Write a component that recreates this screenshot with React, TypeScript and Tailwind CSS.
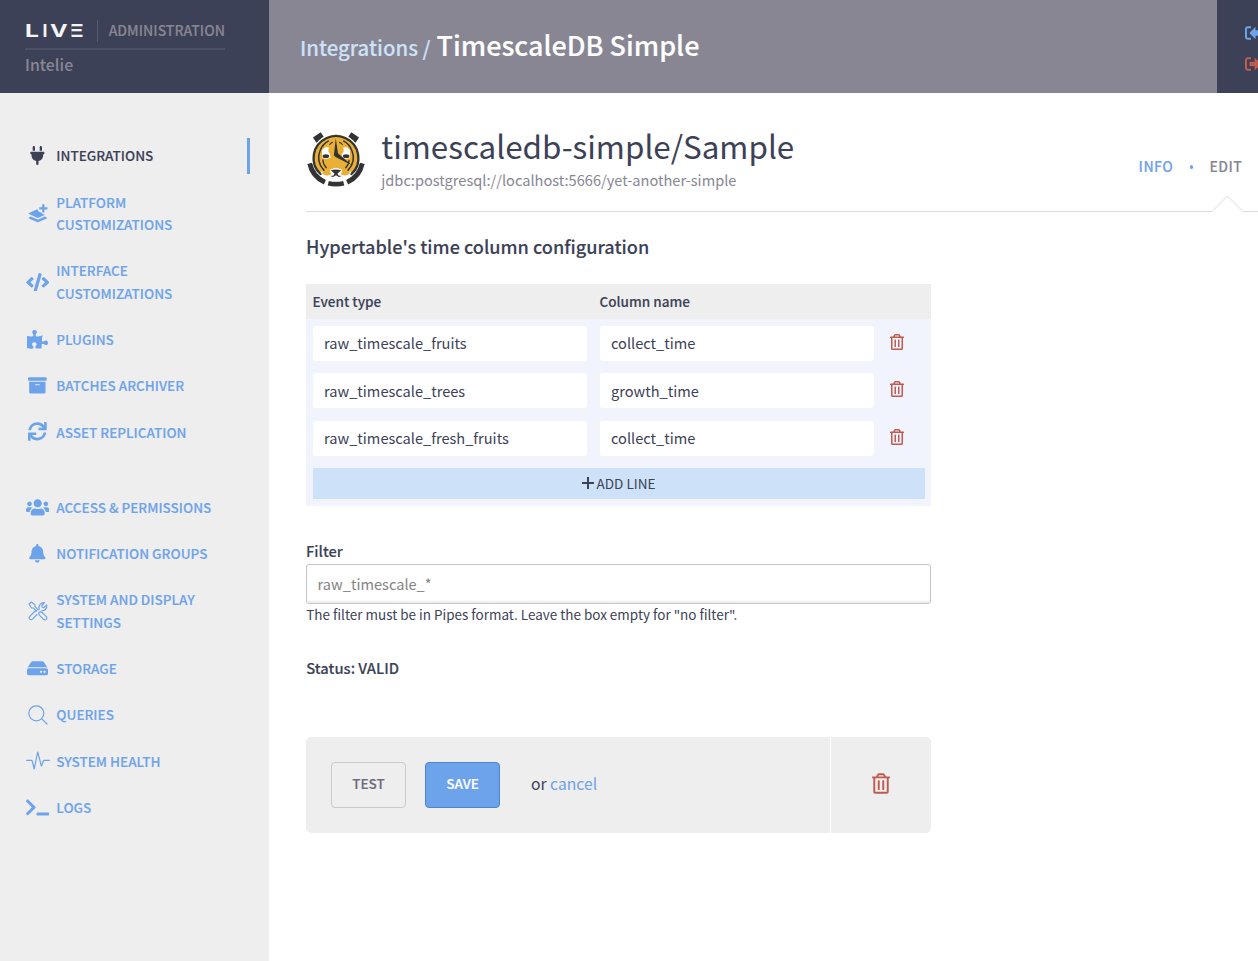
import React from "react";
import {
  FaPlug,
  FaCode,
  FaPuzzlePiece,
  FaArchive,
  FaSync,
  FaUsers,
  FaBell,
  FaHdd,
  FaTerminal,
  FaRegTrashAlt,
} from "react-icons/fa";

const icon = "h-[18.7px] w-[18.7px] shrink-0";
const midIcon = "h-[18.7px] w-[21px] shrink-0";
const wideIcon = "h-[18.7px] w-[23.4px] shrink-0";

function LayerPlus() {
  return (
    <svg viewBox="0 0 20 19" className="h-[19px] w-[20px]" fill="currentColor">
      <path d="M14.2 0.2h2.200v3h3v2.200h-3v3h-2.200v-3h-3V3.200h3z" />
      <path d="M8.600 5.600L1 9q-1 .5 0 1l8 3.700q.8.300 1.600 0l6.400-3q-3 0-3.600-2.100-3-.2-3.600-3-.6-.300-1.200 0z" />
      <path d="M2.800 12.600L1 13.400q-1 .5 0 1l8 3.700q.8.300 1.600 0l8-3.700q1-.5 0-1l-1.800-.8-6 2.700q-1 .4-2 0z" />
    </svg>
  );
}

function Tools() {
  return (
    <svg viewBox="0 0 20 20" className="size-[20px]" fill="none" stroke="currentColor" strokeWidth="1.15" strokeLinejoin="round" strokeLinecap="round">
      <path d="M1 3.200L3.200 1l3.600 2.400.3 2.200 3.200 3.200M1 3.200l2.400 3.600 2.200.3 3.200 3.200" />
      <path d="M11 11.600q1.600-1.300 3.300 0l4 4q1.200 1.400 0 2.700-1.300 1.200-2.700 0l-4-4q-1.300-1.400-.6-2.700z" />
      <path d="M9 13.500l-4.500 4.600q-1.300 1.200-2.700 0-1.200-1.400 0-2.700L8.200 9" />
      <path d="M11.200 8.600q-.9-3.200.9-5.300Q14 1.200 16.600 1.700L13.800 4.500l.4 1.700 1.700.4 2.800-2.800q.6 2.800-1.400 4.700-1.400 1.400-3.500 1.300" />
    </svg>
  );
}

function Search() {
  return (
    <svg viewBox="0 0 20 20" className="size-[20px]" fill="none" stroke="currentColor" strokeWidth="1.200" strokeLinecap="round">
      <circle cx="8.300" cy="8.300" r="7.500" />
      <path d="M13.800 13.800l5.200 5.200" />
    </svg>
  );
}

function Pulse() {
  return (
    <svg viewBox="0 0 24 19" className="h-[19px] w-[24px]" fill="none" stroke="currentColor" strokeWidth="1.200" strokeLinecap="round" strokeLinejoin="round">
      <path d="M.6 9.300H6l2.200 8.700L11.700 1l3.700 14 2.300-5.700h5.700" />
    </svg>
  );
}

function Tiger() {
  return (
    <svg viewBox="0 0 60 60" className="mx-[1px] size-[58px] shrink-0">
      <g stroke="#333" fill="none">
        <path d="M2.800 33.500A28 28 0 0 0 18.500 53" strokeWidth="5" />
        <path d="M57.200 33.500A28 28 0 0 1 41.500 53" strokeWidth="5" />
        <path d="M22 54q8 2 16 0" strokeWidth="4.800" />
        <path d="M8 9.500L16 4" strokeWidth="6.500" />
        <path d="M52 9.500L44 4" strokeWidth="6.500" />
      </g>
      <circle cx="30" cy="27" r="24.800" fill="#fff" />
      <circle cx="30" cy="27" r="23" fill="#e9b035" />
      <path d="M12 43q5 9 18 9t18-9l-7-2-11-3-11 3z" fill="#fff" />
      <path d="M15.500 20q3.500-5 7-3l-.5 4q2.500 3 2.500 6.500-5 2.500-9 0zM44.500 20q-3.500-5-7-3l.5 4q-2.500 3-2.500 6.500 5 2.500 9 0z" fill="#fff" />
      <path d="M16 36l8 3q-1 3 1.500 5.500-5 3-9.500 0zM44 36l-8 3q1 3-1.500 5.500 5 3 9.500 0z" fill="#e9b035" />
      <g stroke="#333" fill="none" strokeLinecap="round">
        <path d="M14 44.500A22.500 22.500 0 0 1 20 7.500Q30 2.500 40 7.500A22.500 22.500 0 0 1 46 44.500" strokeWidth="2.400" />
        <path d="M17.500 40.500A18 18 0 0 1 13.500 20.500Q16 13.500 22 10.500M42.500 40.500A18 18 0 0 0 46.500 20.500Q44 13.500 38 10.500" strokeWidth="1.600" />
        <path d="M20 38Q16.500 34.500 16.500 30M40 38Q43.500 34.500 43.500 30.500" strokeWidth="1.300" />
        <path d="M23.500 14q1.500-2 3-2.300M36.500 14q-1.500-2-3-2.300" strokeWidth="1.100" />
      </g>
      <ellipse cx="19.500" cy="26" rx="3.400" ry="1.900" fill="#333" />
      <ellipse cx="40.500" cy="26" rx="3.400" ry="1.900" fill="#333" />
      <path d="M29.800 7.500L27.800 25l1.700 2L46.500 35.500 32 23z" fill="#333" />
      <path d="M24.500 40.500q5.500-1.500 11 0l-4 3.500 1 2 3.500.5-3 1-3-1.700-3 1.700-3-1 3.500-.5 1-2z" fill="#333" />
    </svg>
  );
}

function Item({ icon, label, active }: { icon: React.ReactNode; label: React.ReactNode; active?: boolean }) {
  return (
    <a className={`flex items-center py-[11.86px] pr-[19px] pl-[25px] ${active ? "text-[#3c4157]" : "text-[#6da3ea]"}`}>
      <span className="flex w-[25px] shrink-0 justify-center">{icon}</span>
      <span className="ml-[6.3px] flex-1 text-[13.52px] leading-[22.5px] font-medium [-webkit-text-stroke:0.12px]">{label}</span>
      {active && <span className="-my-[7px] h-9 w-[3px] bg-[#6da3ea]" />}
    </a>
  );
}

const lines = [
  ["raw_timescale_fruits", "collect_time"],
  ["raw_timescale_trees", "growth_time"],
  ["raw_timescale_fresh_fruits", "collect_time"],
];

const field = "h-[35px] w-[274px] rounded-[3px] bg-white pl-[11px] pb-[1.8px] text-[14.6px] outline-none";

export default function App() {
  return (
    <div className="flex h-[961px] w-[1258px] flex-col overflow-hidden bg-white font-['Noto_Sans_CJK_SC','Noto_Sans',sans-serif] text-[#3c4157]">
      <header className="flex h-[93px] shrink-0">
        <div className="w-[269px] bg-[#3c4157] pt-[20px] pl-[25px] font-medium text-[#888693]">
          <div className="flex h-[30px] w-[200px] border-b-2 border-[#4d5167]">
            <div className="flex h-[22px] w-[73px] items-center border-r border-[#555970] font-['Inter',sans-serif] text-[17.5px] leading-[22px] font-bold text-[#f4f4f6]">
              <span className="w-[17.500px] origin-left scale-x-[1.4]">L</span>
              <span className="w-[7px]">I</span>
              <span className="w-[14.500px] origin-left scale-x-[1.35]">V</span>
              <span className="w-[11px] origin-left scale-x-[1.9] [clip-path:inset(0_0_0_36%)]">E</span>
            </div>
            <span className="-mt-px ml-[11px] text-[14px] leading-[22px] [-webkit-text-stroke:0.12px]">ADMINISTRATION</span>
          </div>
          <div className="text-[15.9px] leading-[30px] [-webkit-text-stroke:0.1px]">Intelie</div>
        </div>
        <div className="flex flex-1 items-baseline bg-[#888693] pt-[25px] pl-[31px] font-medium">
          <span className="text-[20.400px] leading-[40px] text-[#cde2f8] [-webkit-text-stroke:0.12px]">Integrations /</span>
          <span className="ml-[6px] text-[26.950px] leading-[40px] text-white [-webkit-text-stroke:0.15px]">TimescaleDB Simple</span>
        </div>
        <div className="flex w-[41px] flex-col gap-[17px] overflow-hidden bg-[#3c4157] pt-[25.500px] pl-[27.500px]">
          <svg viewBox="0 0 20 14" className="h-[14px] w-[20px] shrink-0 text-[#6da3ea]" fill="currentColor">
            <path d="M6 1.200H3Q1 1.200 1 3.200v7.600q0 2 2 2h3" fill="none" stroke="currentColor" strokeWidth="2" />
            <path d="M5 6.300L10.500 .8v3.400H19v5.600h-8.500v3.400L5 7.700q-.6-.7 0-1.400z" />
          </svg>
          <svg viewBox="0 0 20 14" className="h-[14px] w-[20px] shrink-0 text-[#c05b4f]" fill="currentColor">
            <path d="M6 1.200H3Q1 1.200 1 3.200v7.600q0 2 2 2h3" fill="none" stroke="currentColor" strokeWidth="2" />
            <path d="M4.600 4.700h5V.8l6.600 5.700q.4.5 0 1L9.600 13.200V9.300h-5z" />
          </svg>
        </div>
      </header>

      <div className="flex min-h-0 flex-1">
        <nav className="w-[269px] shrink-0 bg-[#eeeeee] pt-[39.6px]">
          <Item active icon={<FaPlug className={icon} />} label="INTEGRATIONS" />
          <Item icon={<LayerPlus />} label={<>PLATFORM<br />CUSTOMIZATIONS</>} />
          <Item icon={<FaCode className={wideIcon} />} label={<>INTERFACE<br />CUSTOMIZATIONS</>} />
          <Item icon={<FaPuzzlePiece className={midIcon} />} label="PLUGINS" />
          <Item icon={<FaArchive className={icon} />} label="BATCHES ARCHIVER" />
          <Item icon={<FaSync className={icon} />} label="ASSET REPLICATION" />
          <div className="h-[29.2px]" />
          <Item icon={<FaUsers className={wideIcon} />} label="ACCESS & PERMISSIONS" />
          <Item icon={<FaBell className={icon} />} label="NOTIFICATION GROUPS" />
          <Item icon={<Tools />} label={<>SYSTEM AND DISPLAY<br />SETTINGS</>} />
          <Item icon={<FaHdd className={midIcon} />} label="STORAGE" />
          <Item icon={<Search />} label="QUERIES" />
          <Item icon={<Pulse />} label="SYSTEM HEALTH" />
          <Item icon={<FaTerminal className={wideIcon} />} label="LOGS" />
        </nav>

        <main className="flex-1 pl-[37px]">
          <div className="flex h-[103px]">
            <div className="pt-[38px]">
              <Tiger />
            </div>
            <div className="ml-[15.300px] flex-1 pt-[30px]">
              <h1 className="text-[31.400px] leading-[46px]">timescaledb-simple/Sample</h1>
              <p className="text-[14.600px] leading-[22px] text-[#888693]">
                jdbc:postgresql://localhost:5666/yet-another-simple
              </p>
            </div>
            <div className="mt-[62px] flex h-[22px] items-center pr-[15.700px] text-[14px] leading-[22px] font-medium tracking-[.45px] [-webkit-text-stroke:0.12px]">
              <a className="text-[#6da3ea]">INFO</a>
              <span className="mx-[16.300px] mt-[2px] size-[3.500px] rounded-full bg-[#6da3ea]" />
              <span className="text-[#888693]">EDIT</span>
            </div>
          </div>
          <div className="flex h-[16px] items-end">
            <div className="h-px flex-1 bg-[#dcdce0]" />
            <svg viewBox="0 0 31 16" className="h-[16px] w-[31px] overflow-visible" fill="none" stroke="#dcdce0">
              <path d="M0 15.500L15.500 0l15.500 15.500" />
            </svg>
            <div className="h-px w-[15px] bg-[#dcdce0]" />
          </div>

          <div className="w-[625px]">
            <h2 className="mt-[22px] text-[18.100px] leading-[24px] font-medium [-webkit-text-stroke:0.12px]">
              Hypertable's time column configuration
            </h2>
            <div className="mt-[26px] bg-[#f1f4fd] pb-[7px]">
              <div className="flex h-[35px] bg-[#eeeeee] pl-[6.500px] text-[13.550px] leading-[35px] font-medium [-webkit-text-stroke:0.12px]">
                <span className="w-[287px]">Event type</span>
                <span>Column name</span>
              </div>
              <div className="flex flex-col gap-[12.450px] pt-[7px] pl-[7px]">
                {lines.map(([type, col], i) => (
                  <div key={i} className="flex items-center gap-[13px]">
                    <input className={field} defaultValue={type} />
                    <input className={field} defaultValue={col} />
                    <FaRegTrashAlt className="mb-[3px] ml-[3px] h-[16px] w-[14px] text-[#c05b4f]" />
                  </div>
                ))}
              </div>
              <button className="mt-[12.100px] ml-[7px] flex h-[31px] w-[612px] items-center justify-center gap-[3px] bg-[#cde2f8] pr-px text-[13.500px] leading-[31px]">
                <svg viewBox="0 0 12 12" className="size-[12px]" stroke="currentColor" strokeWidth="2">
                  <path d="M6 0v12M0 6h12" />
                </svg>
                ADD LINE
              </button>
            </div>

            <label className="mt-[34px] block text-[14.700px] leading-[22px] font-medium [-webkit-text-stroke:0.12px]">Filter</label>
            <input
              placeholder="raw_timescale_*"
              className="mt-[2px] block h-[40px] w-full rounded-[3px] border border-[#c6c6ca] pb-[1px] pl-[10.600px] text-[14.600px] shadow-[inset_0_-2px_2px_#eeeeee] outline-none placeholder:text-[#838383]"
            />
            <p className="-mt-px pl-[.3px] text-[13.480px] leading-[22px]">
              The filter must be in Pipes format. Leave the box empty for "no filter".
            </p>
            <p className="mt-[32px] pl-[.3px] text-[14.750px] leading-[22px] font-medium [-webkit-text-stroke:0.12px]">Status: VALID</p>

            <div className="mt-[58px] flex h-[96px] overflow-hidden rounded-[5px] bg-[#eeeeee]">
              <div className="flex flex-1 items-center pl-[25px]">
                <button className="h-[46px] w-[75px] rounded-[4px] border border-[#c8c8d0] pb-[3px] text-[13.500px] font-medium text-[#6c6b7a] [-webkit-text-stroke:0.15px]">
                  TEST
                </button>
                <button className="ml-[19px] h-[46px] w-[75px] rounded-[4px] border border-[#4b86cc] bg-[#6da3ea] pb-[3px] text-[13.500px] font-medium text-white [-webkit-text-stroke:0.15px]">
                  SAVE
                </button>
                <span className="mb-[3px] ml-[31px] text-[15.700px]">
                  or <a className="text-[#6da3ea]">cancel</a>
                </span>
              </div>
              <div className="flex w-[101px] items-center justify-center border-l border-white">
                <FaRegTrashAlt className="mt-[-2px] h-[21px] w-[18px] text-[#c05b4f]" />
              </div>
            </div>
          </div>
        </main>
      </div>
    </div>
  );
}
